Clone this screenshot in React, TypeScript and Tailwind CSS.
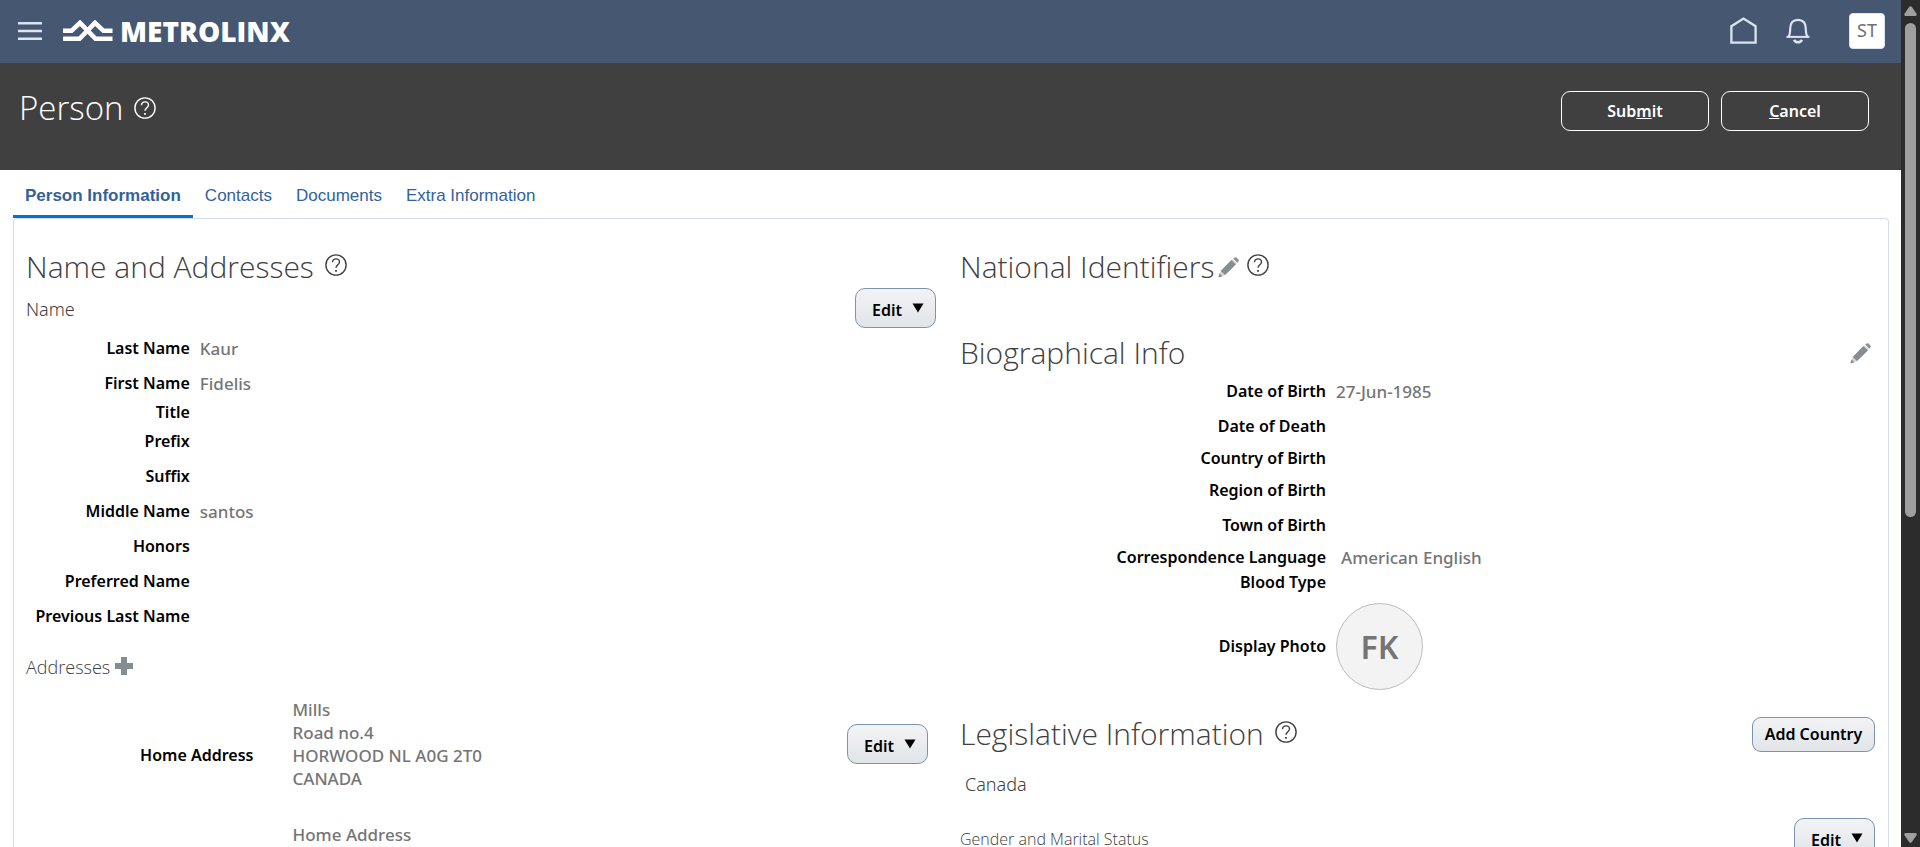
import type { ReactNode } from "react";

type FieldData = { label: string; value?: string; height: string; inset?: boolean };

const nameFields: FieldData[] = [
  { label: "Last Name", value: "Kaur", height: "h-[35px]" },
  { label: "First Name", value: "Fidelis", height: "h-[35px]" },
  { label: "Title", height: "h-[23px]" },
  { label: "Prefix", height: "h-[35px]" },
  { label: "Suffix", height: "h-[35px]" },
  { label: "Middle Name", value: "santos", height: "h-[35px]" },
  { label: "Honors", height: "h-[35px]" },
  { label: "Preferred Name", height: "h-[35px]" },
  { label: "Previous Last Name", height: "h-[35px]" },
];

const bioFields: FieldData[] = [
  { label: "Date of Birth", value: "27-Jun-1985", height: "h-[35px]" },
  { label: "Date of Death", height: "h-[35px]" },
  { label: "Country of Birth", height: "h-[29px]" },
  { label: "Region of Birth", height: "h-[35px]" },
  { label: "Town of Birth", height: "h-[35px]" },
  { label: "Correspondence Language", value: "American English", height: "h-[28px]", inset: true },
  { label: "Blood Type", height: "h-[23px]" },
];

const tabs = ["Person Information", "Contacts", "Documents", "Extra Information"];

function HelpButton({ label }: { label: string }) {
  return (
    <button type="button" aria-label={label} className="mb-1 shrink-0">
      <svg width="22" height="22" viewBox="0 0 22 22" fill="none" stroke="currentColor" strokeWidth="1.400">
        <circle cx="11" cy="11" r="10.100" />
        <path d="M7.500 8.200C7.500 6 9 4.900 11 4.900s3.500 1.200 3.500 3.100c0 1.600-.9 2.300-1.900 3.100-1 .8-1.600 1.300-1.600 2.700" />
        <path d="M11 15.900v1.900" strokeWidth="1.800" />
      </svg>
    </button>
  );
}

function PencilButton({ label }: { label: string }) {
  return (
    <button type="button" aria-label={label} className="shrink-0">
      <svg width="21" height="21" viewBox="0 0 21 21">
        <path d="M15.200 1.600 16.700.5q1-.7 1.800.1l1.900 1.900q.8.900.1 1.800l-1.200 1.500z" fill="#8b9195" />
        <path d="M14.600 2.200l4.100 4.100-1.200 1.200-4.100-4.100z" fill="#d3d6d8" />
        <path d="M13.400 3.100l4.500 4.500L6.900 18.200l-4.300-4.300z" fill="#868d92" />
        <path d="M2.600 13.900l4.300 4.300-2.600.9-2.600-2.600z" fill="#d3d6d8" />
        <path d="M1.500 16.200l3 3L.3 20.600z" fill="#868d92" />
      </svg>
    </button>
  );
}

const buttonSkin =
  "shrink-0 border border-[#7b93ab] bg-linear-to-b from-[#f2f3f5] to-[#e1e5e8] text-[16px] font-semibold text-black";

function EditButton({ label }: { label: string }) {
  return (
    <button
      type="button"
      aria-haspopup="menu"
      aria-label={label}
      className={`${buttonSkin} flex h-10 w-[81px] items-center justify-center gap-[10px] rounded-[10px] pt-1 pl-[5px]`}
    >
      Edit
      <svg width="12" height="10" viewBox="0 0 12 10" className="mb-1">
        <path d="M.5.5h11L6 9.500z" />
      </svg>
    </button>
  );
}

function Field({ label, labelWidth, height, children }: { label: string; labelWidth: string; height: string; children?: ReactNode }) {
  return (
    <div className={`flex items-center ${height}`}>
      <dt className={`shrink-0 text-right text-[16px] font-semibold whitespace-nowrap text-black ${labelWidth}`}>{label}</dt>
      <dd className="pl-[10px] font-medium text-[#757575]">{children}</dd>
    </div>
  );
}

function Heading({ children }: { children: ReactNode }) {
  return (
    <h2 className="font-['Open_Sans',sans-serif] text-[30px] leading-[42px] font-light whitespace-nowrap">{children}</h2>
  );
}

export default function App() {
  return (
    <div className="flex h-screen overflow-hidden bg-white font-['Noto_Sans','Open_Sans',sans-serif] text-[#404040]">
      <div className="flex min-w-0 flex-1 flex-col overflow-hidden">
        <header className="flex h-[63px] shrink-0 items-center bg-[#465772] pr-4 pb-0.5 pl-[18px] text-[#dbe4f3]">
          <button type="button" aria-label="Navigator">
            <svg width="24" height="18" viewBox="0 0 24 18" fill="currentColor">
              <path d="M0 0h24v2.500H0zM0 7.700h24v2.500H0zM0 15.500h24V18H0z" />
            </svg>
          </button>
          <a href="#home" className="ml-5 flex items-center gap-[7px] text-white">
            <svg width="51" height="22" viewBox="0 0 51 22" fill="none" stroke="currentColor" strokeWidth="4.600">
              <path d="M1 10.800H9.500L18 2.800 33.500 18.800H50.500" />
              <path d="M1 18.800H17.500L33 2.800 41.500 10.800H50.500" />
            </svg>
            <span className="font-['Open_Sans',sans-serif] text-[28px] leading-[32px] font-extrabold">METROLINX</span>
          </a>
          <div className="ml-auto flex items-center">
            <button type="button" aria-label="Home">
              <svg width="27" height="27" viewBox="0 0 27 27" fill="none" stroke="currentColor" strokeWidth="2.300">
                <path d="M1.400 25.600V9.200L13.500 1.500 25.600 9.200V25.600z" />
              </svg>
            </button>
            <button type="button" aria-label="Notifications" className="ml-[29px]">
              <svg width="24" height="26" viewBox="0 0 24 26" fill="none" stroke="currentColor" strokeWidth="2.200">
                <path d="M2 18.900C4 17.600 4.200 14 4.200 10.500 4.200 5 7 1.800 12 1.800S19.800 5 19.800 10.500c0 3.500.2 7.100 2.200 8.400" />
                <path d="M.5 18.900h23" strokeWidth="2" />
                <path d="M8 21.800q1.200 2.400 4 2.400t4-2.400" strokeWidth="2.600" />
              </svg>
            </button>
            <button
              type="button"
              aria-label="Settings and Actions"
              className="ml-[39px] h-9 w-9 rounded border border-[#dbe4f3] bg-white text-[18px] text-[#70706f]"
            >
              ST
            </button>
          </div>
        </header>

        <div className="flex h-[107px] shrink-0 items-start bg-[#404040] pr-8 pl-[19px] text-white">
          <h1 className="mt-[22px] font-['Open_Sans',sans-serif] text-[33px] leading-[46px] font-light">Person</h1>
          <div className="mt-[34px] ml-[11px]">
            <HelpButton label="Help on Person" />
          </div>
          <div className="mt-7 ml-auto flex gap-3 text-[16px] font-semibold">
            <button type="button" className="h-10 w-[148px] rounded-[9px] border border-white">
              Sub<u>m</u>it
            </button>
            <button type="button" className="h-10 w-[148px] rounded-[9px] border border-white">
              <u>C</u>ancel
            </button>
          </div>
        </div>

        <div className="flex min-h-0 flex-1 flex-col px-3 pl-[13px]">
          <div
            role="tablist"
            className="flex h-12 shrink-0 font-['Liberation_Sans',sans-serif] text-[17px] text-[#31629b]"
          >
            {tabs.map((tab, i) => (
              <button
                key={tab}
                type="button"
                role="tab"
                aria-selected={i === 0}
                className={
                  i === 0
                    ? "border-b-[3px] border-[#0572ce] px-3 pt-[7px] font-bold"
                    : "border-b-[3px] border-transparent px-3 pt-[7px]"
                }
              >
                {tab}
              </button>
            ))}
          </div>

          <main className="grid flex-1 grid-cols-2 rounded-t-sm border border-b-0 border-[#d2dde6] text-[17px] leading-[23px]">
            <div className="min-w-0 pt-[27px] pr-[15px] pl-3">
              <section>
                <div className="flex items-center gap-[11px]">
                  <Heading>Name and Addresses</Heading>
                  <HelpButton label="Help on Name and Addresses" />
                </div>
                <div className="flex h-[43px] items-start justify-between">
                  <h3 className="pt-[10px] text-[18px] font-light">Name</h3>
                  <EditButton label="Edit Name" />
                </div>
                <dl>
                  {nameFields.map((f) => (
                    <Field key={f.label} label={f.label} labelWidth="w-[18%]" height={f.height}>
                      {f.value}
                    </Field>
                  ))}
                </dl>
              </section>
              <section>
                <div className="flex h-16 items-center gap-[5px]">
                  <h3 className="pt-0.5 font-['Open_Sans',sans-serif] text-[18px] font-light">Addresses</h3>
                  <button type="button" aria-label="Add Address">
                    <svg width="18" height="18" viewBox="0 0 18 18" fill="#868d92">
                      <path d="M6 0h6v6h6v6h-6v6H6v-6H0V6h6z" />
                    </svg>
                  </button>
                </div>
                <div className="flex items-center">
                  <h4 className="w-[25%] shrink-0 pt-[23px] text-right text-[16px] font-semibold text-black">Home Address</h4>
                  <address className="min-w-0 flex-1 pl-[39px] font-medium text-[#757575] not-italic">
                    Mills
                    <br />
                    Road no.4
                    <br />
                    HORWOOD NL A0G 2T0
                    <br />
                    CANADA
                  </address>
                  <div className="pr-2">
                    <EditButton label="Edit Home Address" />
                  </div>
                </div>
                <p className="mt-[33px] ml-[25%] pl-[39px] font-medium text-[#757575]">Home Address</p>
              </section>
            </div>

            <div className="min-w-0 pt-[27px] pr-[13px] pl-[9px]">
              <section className="flex h-[86px] items-start">
                <Heading>National Identifiers</Heading>
                <div className="mt-2 ml-1 flex gap-2">
                  <PencilButton label="Edit National Identifiers" />
                  <HelpButton label="Help on National Identifiers" />
                </div>
              </section>
              <section>
                <div className="flex items-center justify-between pr-1">
                  <Heading>Biographical Info</Heading>
                  <PencilButton label="Edit Biographical Info" />
                </div>
                <dl>
                  {bioFields.map((f) => (
                    <Field key={f.label} label={f.label} labelWidth="w-[40%]" height={f.height}>
                      {f.inset ? <span className="pl-[5px]">{f.value}</span> : f.value}
                    </Field>
                  ))}
                  <Field label="Display Photo" labelWidth="w-[40%]" height="h-[104px]">
                    <div className="flex h-[87px] w-[87px] items-center justify-center rounded-full border border-[#bcbcbc] bg-[#f3f3f3] text-[32px] font-semibold">
                      FK
                    </div>
                  </Field>
                </dl>
              </section>
              <section className="pt-[15px]">
                <div className="flex h-[42px] items-center gap-[11px]">
                  <Heading>Legislative Information</Heading>
                  <HelpButton label="Help on Legislative Information" />
                  <button type="button" className={`${buttonSkin} ml-auto h-[35px] w-[123px] rounded-[9px] whitespace-nowrap`}>
                    Add Country
                  </button>
                </div>
                <h3 className="mt-[18px] pl-[5px] text-[18px] font-light">Canada</h3>
                <div className="mt-[22px] flex items-start justify-between">
                  <h4 className="pt-[10px] font-['Open_Sans',sans-serif] text-[16px] font-light">Gender and Marital Status</h4>
                  <EditButton label="Edit Gender and Marital Status" />
                </div>
              </section>
            </div>
          </main>
        </div>
      </div>

      <div aria-hidden="true" className="flex w-[19px] shrink-0 flex-col items-center justify-between bg-[#2c2c2c] pt-[6px] pb-1">
        <svg width="13" height="10" viewBox="0 0 13 10" fill="#9f9f9f">
          <path d="M5.300.8q1.200-1.200 2.400 0l4.800 7q.7 2.200-1.200 2.200H1.700Q-.2 10 .5 7.800z" />
        </svg>
        <div className="mt-[7px] min-h-0 flex-1">
          <div className="h-[61%] w-[11px] rounded-full bg-[#9f9f9f]" />
        </div>
        <svg width="13" height="10" viewBox="0 0 13 10" fill="#9f9f9f">
          <path d="M5.300 9.200q1.200 1.200 2.400 0l4.800-7Q13.200 0 11.300 0H1.700Q-.2 0 .5 2.200z" />
        </svg>
      </div>
    </div>
  );
}
